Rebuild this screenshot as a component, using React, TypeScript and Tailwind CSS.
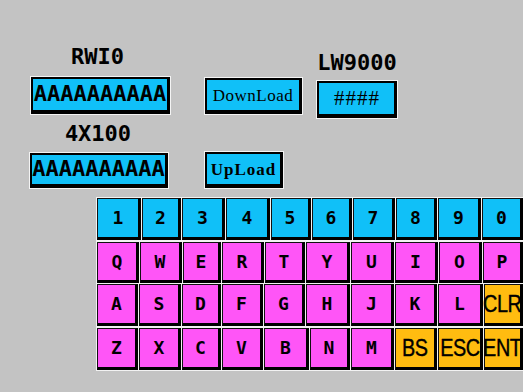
import React from 'react';

type KeyDef = { label: string; w: number; kind?: 'num' | 'alpha' | 'fn' };

const mono = { fontFamily: '"DejaVu Sans Mono", "Liberation Mono", monospace' };

const rows: { h: string; mt: string; keys: KeyDef[] }[] = [
  {
    h: 'h-[42px]',
    mt: 'mt-0',
    keys: [
      { label: '1', w: 44, kind: 'num' },
      { label: '2', w: 39, kind: 'num' },
      { label: '3', w: 43, kind: 'num' },
      { label: '4', w: 44, kind: 'num' },
      { label: '5', w: 40, kind: 'num' },
      { label: '6', w: 40, kind: 'num' },
      { label: '7', w: 42, kind: 'num' },
      { label: '8', w: 41, kind: 'num' },
      { label: '9', w: 43, kind: 'num' },
      { label: '0', w: 41, kind: 'num' },
    ],
  },
  {
    h: 'h-[41px]',
    mt: 'mt-[2px]',
    keys: [
      { label: 'Q', w: 42 },
      { label: 'W', w: 42 },
      { label: 'E', w: 38 },
      { label: 'R', w: 42 },
      { label: 'T', w: 40 },
      { label: 'Y', w: 44 },
      { label: 'U', w: 43 },
      { label: 'I', w: 43 },
      { label: 'O', w: 43 },
      { label: 'P', w: 40 },
    ],
  },
  {
    h: 'h-[42px]',
    mt: 'mt-[1px]',
    keys: [
      { label: 'A', w: 41 },
      { label: 'S', w: 42 },
      { label: 'D', w: 39 },
      { label: 'F', w: 41 },
      { label: 'G', w: 41 },
      { label: 'H', w: 44 },
      { label: 'J', w: 43 },
      { label: 'K', w: 42 },
      { label: 'L', w: 45 },
      { label: 'CLR', w: 39, kind: 'fn' },
    ],
  },
  {
    h: 'h-[42px]',
    mt: 'mt-[2px]',
    keys: [
      { label: 'Z', w: 41 },
      { label: 'X', w: 42 },
      { label: 'C', w: 39 },
      { label: 'V', w: 41 },
      { label: 'B', w: 45 },
      { label: 'N', w: 40 },
      { label: 'M', w: 43 },
      { label: 'BS', w: 42, kind: 'fn' },
      { label: 'ESC', w: 45, kind: 'fn' },
      { label: 'ENT', w: 39, kind: 'fn' },
    ],
  },
];

const Key: React.FC<{ k: KeyDef }> = ({ k }) => {
  const bg =
    k.kind === 'num' ? 'bg-[#10c0f8]' : k.kind === 'fn' ? 'bg-[#ffbc10]' : 'bg-[#ff55f7]';
  return (
    <div
      className={`${bg} h-full shrink-0 flex items-center justify-center overflow-visible border-t border-l border-[#111] border-r-[3px] border-b-[3px] border-r-black border-b-black text-black`}
      style={{ width: k.w }}
    >
      {k.kind === 'fn' ? (
        <span
          className="text-[23px] leading-none whitespace-nowrap scale-x-[0.86] tracking-[-0.5px] [-webkit-text-stroke:0.4px_black]"
          style={{ fontFamily: '"Liberation Sans", Arial, sans-serif' }}
        >
          {k.label}
        </span>
      ) : (
        <span className="text-[18px] font-bold leading-none" style={mono}>
          {k.label}
        </span>
      )}
    </div>
  );
};

const boxFrame =
  'bg-[#10c0f8] border-2 border-black border-r-[3px] border-b-[4px] ring-1 ring-[#f4f4f4] flex items-center justify-center overflow-hidden text-black';

const App: React.FC = () => {
  return (
    <div className="w-[523px] h-[392px] bg-[#c3c3c3] overflow-hidden pt-[46px]">
      {/* Row 1 */}
      <div className="flex items-start">
        <div className="ml-[31px] w-[139px] flex flex-col items-center">
          <div className="h-[22px] text-[22px] leading-[22px] font-bold text-black -ml-[6px]" style={mono}>
            RWI0
          </div>
          <div className={`${boxFrame} mt-[9px] w-[139px] h-[37px]`}>
            <span className="text-[22px] font-bold leading-none -mt-[2px]" style={mono}>
              AAAAAAAAAA
            </span>
          </div>
        </div>
        <div className={`${boxFrame} ml-[35px] mt-[32px] w-[97px] h-[36px]`}>
          <span
            className="text-[17px] leading-none tracking-[0.5px]"
            style={{ fontFamily: '"Liberation Serif", "DejaVu Serif", serif' }}
          >
            DownLoad
          </span>
        </div>
        <div className="ml-[15px] flex flex-col items-center">
          <div className="h-[22px] mt-[6px] text-[22px] leading-[22px] font-bold text-black" style={mono}>
            LW9000
          </div>
          <div className={`${boxFrame} mt-[7px] w-[80px] h-[37px]`}>
            <span
              className="text-[21px] leading-none tracking-[1px] pl-[1px]"
              style={{ fontFamily: '"Liberation Serif", "DejaVu Serif", serif' }}
            >
              ####
            </span>
          </div>
        </div>
      </div>

      {/* Row 2 */}
      <div className="flex items-start mt-[5px]">
        <div className="ml-[30px] w-[138px] flex flex-col items-center">
          <div className="h-[22px] text-[22px] leading-[22px] font-bold text-black -ml-[2px]" style={mono}>
            4X100
          </div>
          <div className={`${boxFrame} mt-[8px] w-[138px] h-[35px]`}>
            <span className="text-[22px] font-bold leading-none -mt-[2px]" style={mono}>
              AAAAAAAAAA
            </span>
          </div>
        </div>
        <div className={`${boxFrame} ml-[37px] mt-[29px] w-[78px] h-[36px]`}>
          <span
            className="text-[17px] font-bold leading-none tracking-[1px]"
            style={{ fontFamily: '"Liberation Serif", "DejaVu Serif", serif' }}
          >
            UpLoad
          </span>
        </div>
      </div>

      {/* Keyboard */}
      <div className="ml-[96px] mt-[9px] w-[440px] bg-[#f2f2f2] p-px">
        {rows.map((row, i) => (
          <div key={i} className={`flex gap-px ${row.h} ${row.mt}`}>
            {row.keys.map((k) => (
              <Key key={k.label} k={k} />
            ))}
          </div>
        ))}
      </div>
    </div>
  );
};

export default App;
